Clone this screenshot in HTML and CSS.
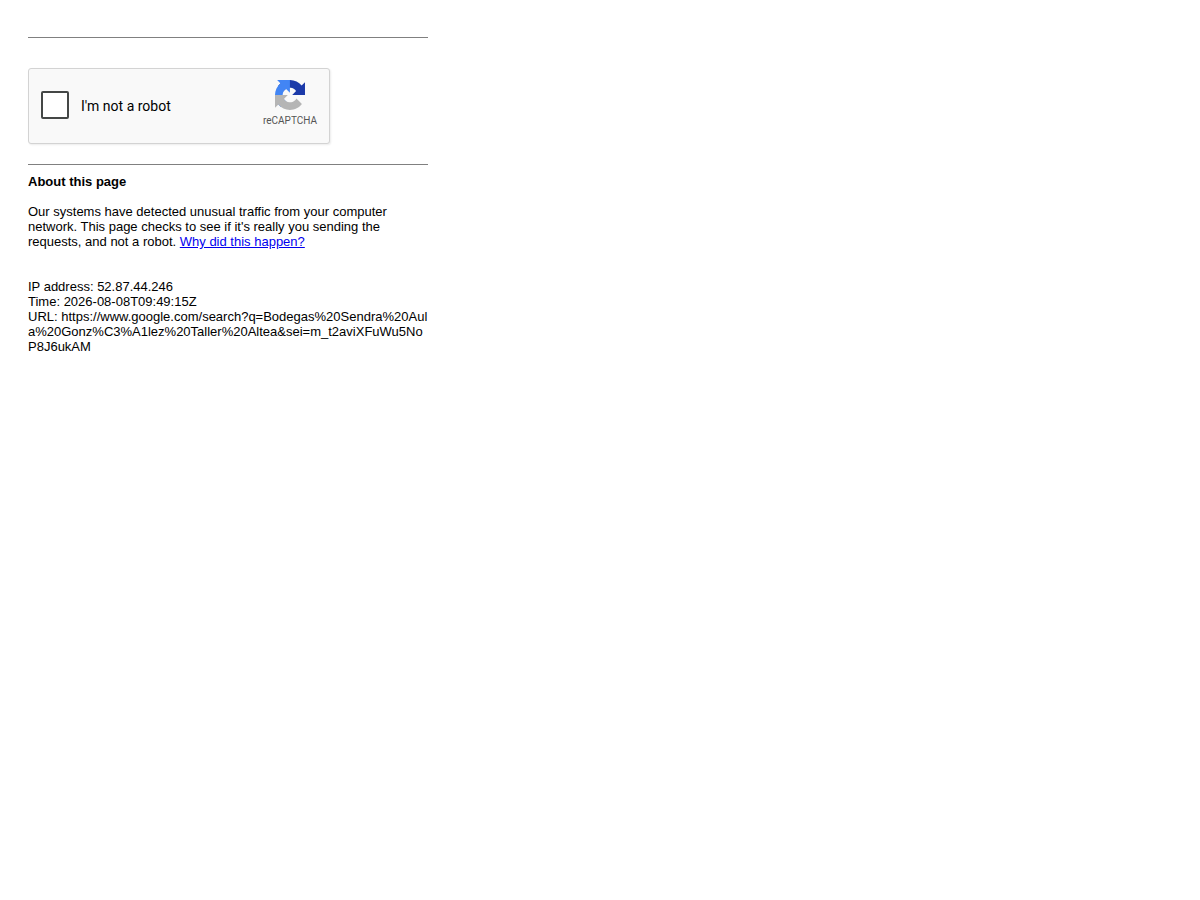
FILE: index.html
```html
<!DOCTYPE html>
<html lang="en">
<head>
<meta charset="utf-8">
<meta name="viewport" content="width=device-width, initial-scale=1">
<title>About this page</title>
<link rel="stylesheet" href="styles.css">
</head>
<body>
<main class="page">
  <hr class="rule">
  <form class="captcha">
    <input class="captcha-box" type="checkbox" id="robot">
    <label class="captcha-label" for="robot">I'm not a robot</label>
    <div class="brand">
      <svg class="brand-logo" viewBox="0 0 64 64" aria-hidden="true">
        <path fill="#1c3aa9" d="M64 31.955l-.033-1.37V4.687l-7.16 7.16C50.948 4.674 42.033.093 32.05.093c-10.4 0-19.622 4.96-25.458 12.64l11.736 11.86a15.55 15.55 0 0 1 4.754-5.334c2.05-1.6 4.952-2.906 8.968-2.906.485 0 .86.057 1.135.163 4.976.393 9.288 3.14 11.828 7.124l-8.307 8.307L64 31.953"/>
        <path fill="#4285f4" d="M31.862.094l-1.37.033H4.594l7.16 7.16C4.58 13.147 0 22.06 0 32.046c0 10.4 4.96 19.622 12.64 25.458L24.5 45.768a15.55 15.55 0 0 1-5.334-4.754c-1.6-2.05-2.906-4.952-2.906-8.968 0-.485.057-.86.163-1.135.393-4.976 3.14-9.288 7.124-11.828l8.307 8.307L31.86.095"/>
        <path fill="#b5b5b5" d="M.001 32.045l.033 1.37v25.898l7.16-7.16c5.86 7.173 14.774 11.754 24.76 11.754 10.4 0 19.622-4.96 25.458-12.64l-11.736-11.86a15.55 15.55 0 0 1-4.754 5.334c-2.05 1.6-4.952 2.906-8.968 2.906-.485 0-.86-.057-1.135-.163-4.976-.393-9.288-3.14-11.828-7.124l8.307-8.307c-10.522.04-22.4.066-27.295-.005"/>
      </svg>
      <span class="brand-name">reCAPTCHA</span>
    </div>
  </form>
  <hr class="rule">
  <section class="about">
    <h1 class="about-title">About this page</h1>
    <p class="about-text">Our systems have detected unusual traffic from your computer network. This page checks to see if it's really you sending the requests, and not a robot. <a href="#">Why did this happen?</a></p>
    <p class="details">IP address: 52.87.44.246<br>Time: 2026-08-08T09:49:15Z<br>URL: https://www.google.com/search?q=Bodegas%20Sendra%20Aula%20Gonz%C3%A1lez%20Taller%20Altea&amp;sei=m_t2aviXFuWu5NoP8J6ukAM</p>
  </section>
</main>
</body>
</html>
```
FILE: styles.css
```css
body {
  margin: 0;
  padding: 37px 28px 20px;
  background: #fff;
  color: #000;
  font-family: "Liberation Sans", Arial, sans-serif;
  font-size: 13px;
  line-height: 15px;
}

.page {
  max-width: 400px;
}

.rule {
  height: 1px;
  margin: 0;
  border: 0;
  background: #808080;
}

.captcha {
  display: flex;
  align-items: center;
  box-sizing: border-box;
  max-width: 302px;
  min-height: 76px;
  margin: 30px 0 20px;
  padding: 0 12px;
  border: 1px solid #d3d3d3;
  border-radius: 3px;
  background: #f9f9f9;
  box-shadow: 1px 1px 2px rgba(0, 0, 0, 0.08);
  font-family: Roboto, sans-serif;
}

.captcha-box {
  appearance: none;
  box-sizing: border-box;
  width: 28px;
  height: 28px;
  margin: 0 12px 2px 0;
  border: 2px solid #444746;
  border-radius: 2px;
  background: #fff;
  cursor: pointer;
}

.captcha-box:checked {
  background: #4285f4;
}

.captcha-label {
  font-size: 14px;
  line-height: 17px;
}

.brand {
  display: flex;
  flex-direction: column;
  align-items: center;
  gap: 5px;
  margin: 0 0 5px auto;
  color: #555;
}

.brand-logo {
  width: 30px;
  height: 30px;
}

.brand-name {
  font-size: 10px;
  line-height: 12px;
}

.about {
  padding-top: 9px;
}

.about-title {
  margin: 0 0 15px;
  font-size: 13px;
  line-height: 15px;
}

.about-text {
  margin: 0 0 30px;
}

.about-text a {
  color: #00e;
}

.details {
  margin: 0;
  word-break: break-all;
}
```
